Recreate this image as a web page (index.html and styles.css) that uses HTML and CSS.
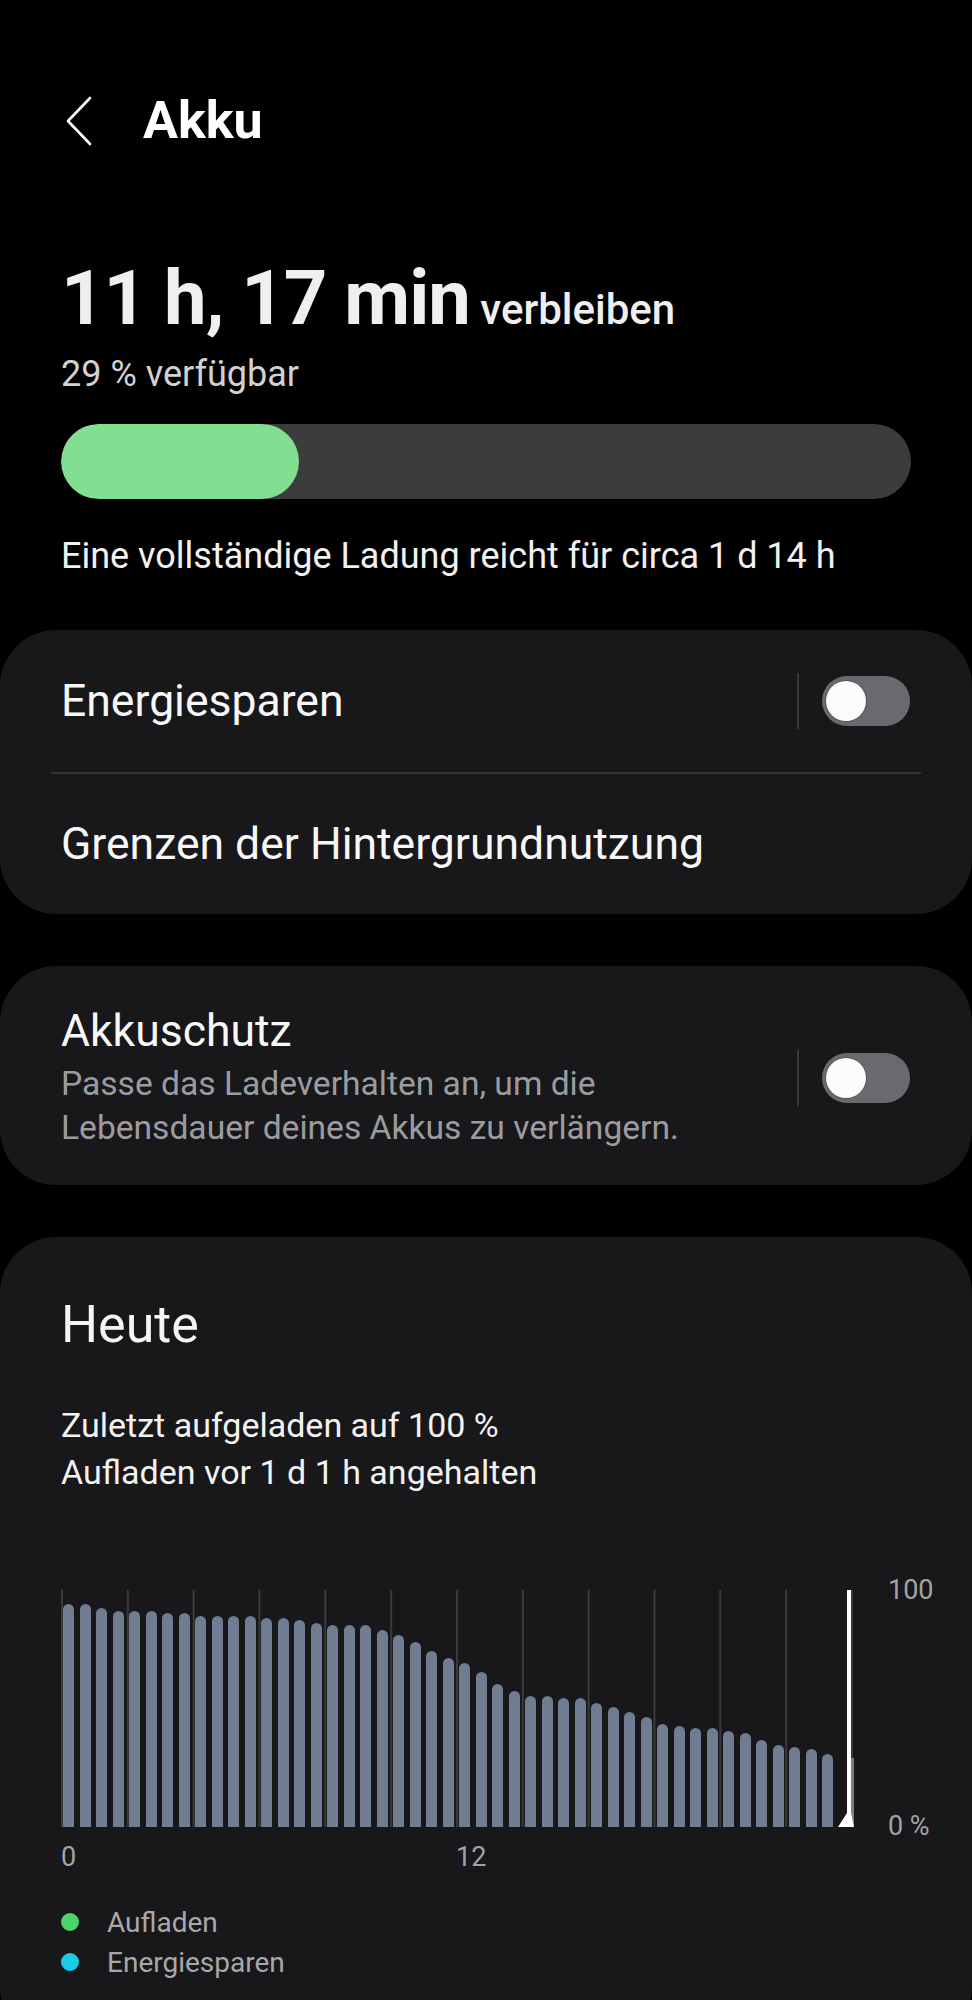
FILE: index.html
```html
<!DOCTYPE html>
<html lang="de">
<head>
  <meta charset="UTF-8" />
  <meta name="viewport" content="width=device-width, initial-scale=1.0"/>
  <title>Akku</title>
  <link rel="stylesheet" href="styles.css">
</head>
<body>
  <div class="screen">
    <header class="topbar">
      <svg class="back" viewBox="0 0 28 50" width="28" height="50">
        <polyline points="25,2 3,25 25,48" fill="none" stroke="#fff" stroke-width="2.6" stroke-linecap="round" stroke-linejoin="round"/>
      </svg>
      <h1>Akku</h1>
    </header>

    <section class="summary">
      <p class="remaining"><strong>11 h, 17 min</strong> <span>verbleiben</span></p>
      <p class="available">29 % verfügbar</p>
      <div class="level"><div class="level-fill" style="width:28%"></div></div>
      <p class="estimate">Eine vollständige Ladung reicht für circa 1 d 14 h</p>
    </section>

    <div class="card">
      <div class="row row-switch">
        <span class="label">Energiesparen</span>
        <span class="sep"></span>
        <span class="switch"><span class="knob"></span></span>
      </div>
      <div class="divider"></div>
      <div class="row row-link">
        <span class="label">Grenzen der Hintergrundnutzung</span>
      </div>
    </div>

    <div class="card">
      <div class="row row-protect">
        <div class="protect-text">
          <div class="label">Akkuschutz</div>
          <div class="hint">Passe das Ladeverhalten an, um die<br>Lebensdauer deines Akkus zu verlängern.</div>
        </div>
        <span class="sep"></span>
        <span class="switch"><span class="knob"></span></span>
      </div>
    </div>

    <div class="card today">
      <h2>Heute</h2>
      <p class="last-charge">Zuletzt aufgeladen auf 100 %<br>Aufladen vor 1 d 1 h angehalten</p>

      <div class="chart">
        <div class="plot">
          <div class="bars">
            <span class="bar" style="height:223px"></span>
            <span class="bar" style="height:223px"></span>
            <span class="bar" style="height:219px"></span>
            <span class="bar" style="height:216px"></span>
            <span class="bar" style="height:216px"></span>
            <span class="bar" style="height:216px"></span>
            <span class="bar" style="height:214px"></span>
            <span class="bar" style="height:214px"></span>
            <span class="bar" style="height:211px"></span>
            <span class="bar" style="height:211px"></span>
            <span class="bar" style="height:211px"></span>
            <span class="bar" style="height:211px"></span>
            <span class="bar" style="height:209px"></span>
            <span class="bar" style="height:209px"></span>
            <span class="bar" style="height:207px"></span>
            <span class="bar" style="height:204px"></span>
            <span class="bar" style="height:202px"></span>
            <span class="bar" style="height:202px"></span>
            <span class="bar" style="height:202px"></span>
            <span class="bar" style="height:197px"></span>
            <span class="bar" style="height:192px"></span>
            <span class="bar" style="height:185px"></span>
            <span class="bar" style="height:176px"></span>
            <span class="bar" style="height:169px"></span>
            <span class="bar" style="height:164px"></span>
            <span class="bar" style="height:155px"></span>
            <span class="bar" style="height:143px"></span>
            <span class="bar" style="height:136px"></span>
            <span class="bar" style="height:131px"></span>
            <span class="bar" style="height:131px"></span>
            <span class="bar" style="height:129px"></span>
            <span class="bar" style="height:129px"></span>
            <span class="bar" style="height:124px"></span>
            <span class="bar" style="height:120px"></span>
            <span class="bar" style="height:115px"></span>
            <span class="bar" style="height:110px"></span>
            <span class="bar" style="height:103px"></span>
            <span class="bar" style="height:101px"></span>
            <span class="bar" style="height:99px"></span>
            <span class="bar" style="height:99px"></span>
            <span class="bar" style="height:96px"></span>
            <span class="bar" style="height:94px"></span>
            <span class="bar" style="height:87px"></span>
            <span class="bar" style="height:82px"></span>
            <span class="bar" style="height:80px"></span>
            <span class="bar" style="height:78px"></span>
            <span class="bar" style="height:73px"></span>
          </div>
          <span class="now-tail"></span>
          <span class="now"></span>
          <span class="now-arrow"></span>
        </div>
        <div class="yaxis">
          <span>100</span>
          <span>0 %</span>
        </div>
      </div>

      <div class="xaxis">
        <span>0</span>
        <span class="noon">12</span>
      </div>

      <ul class="legend">
        <li><span class="dot dot-charge"></span>Aufladen</li>
        <li><span class="dot dot-saver"></span>Energiesparen</li>
      </ul>
    </div>
  </div>
</body>
</html>
```

FILE: styles.css
```css
body {
  margin: 0;
  background: #000;
  font-family: Roboto, "Noto Sans", sans-serif;
  color: #f2f2f2;
}

.screen {
  width: 972px;
}

p {
  margin: 0;
}

/* Kopfzeile */
.topbar {
  display: flex;
  align-items: center;
  height: 60px;
  margin-top: 91px;
  padding-left: 65px;
}

.back {
  display: block;
}

h1 {
  margin: 0 0 0 50px;
  font-size: 52px;
  font-weight: 700;
  line-height: 60px;
  color: #fff;
}

/* Restlaufzeit */
.summary {
  padding: 0 61px;
}

.remaining {
  margin-top: 107px;
  font-size: 42px;
  line-height: 80px;
  color: #efefef;
}

.remaining strong {
  font-size: 76px;
  font-weight: 700;
  letter-spacing: -1px;
}

.remaining span {
  font-weight: 500;
}

.available {
  margin-top: 2px;
  font-size: 36px;
  line-height: 44px;
  color: #d2d2d2;
}

.level {
  margin-top: 28px;
  height: 75px;
  border-radius: 38px;
  background: #3c3c3c;
  overflow: hidden;
}

.level-fill {
  height: 100%;
  border-radius: 38px;
  background: #82de90;
}

.estimate {
  margin-top: 35px;
  font-size: 36px;
  line-height: 44px;
}

/* Karten */
.card {
  margin-top: 52px;
  background: #18181a;
  border-radius: 56px;
}

.row {
  display: flex;
  align-items: center;
  padding: 0 62px 0 61px;
}

.row-switch {
  height: 142px;
}

.row-link {
  height: 140px;
}

.row-protect {
  padding-top: 39px;
  padding-bottom: 35px;
}

.label {
  flex: 1;
  font-size: 44.5px;
  line-height: 52px;
  color: #f7f7f7;
}

.protect-text {
  flex: 1;
}

.hint {
  margin-top: 5px;
  font-size: 33.6px;
  line-height: 44px;
  color: #9c9ca0;
}

.sep {
  width: 2px;
  height: 56px;
  margin-right: 23px;
  background: #38383b;
}

.switch {
  display: flex;
  align-items: center;
  box-sizing: border-box;
  width: 88px;
  height: 50px;
  padding-left: 4px;
  border-radius: 25px;
  background: #6a6a6e;
}

.knob {
  width: 40px;
  height: 40px;
  border-radius: 50%;
  background: #fcfcfd;
  box-shadow: 0 0 0 1px rgba(0,0,0,0.18);
}

.divider {
  height: 2px;
  margin: 0 51px;
  background: #343437;
}

/* Heute */
.today {
  padding: 58px 62px 60px 61px;
}

.today h2 {
  margin: 0;
  font-size: 52px;
  font-weight: 400;
  line-height: 60px;
  color: #f5f5f5;
}

.last-charge {
  margin-top: 47px;
  font-size: 34px;
  line-height: 47px;
}

.chart {
  display: flex;
  margin-top: 94px;
}

.plot {
  position: relative;
  flex-shrink: 0;
  width: 792px;
  height: 237px;
  background: linear-gradient(to right, #3a3a3c 2px, transparent 2px) 0 0 / 65.83px 100% repeat-x;
}

.bars {
  display: flex;
  align-items: flex-end;
  gap: 5.5px;
  height: 100%;
  padding-left: 2px;
}

.bar {
  width: 11px;
  border-radius: 6px 6px 0 0;
  background: #707c91;
}

.now {
  position: absolute;
  top: 0;
  bottom: 0;
  left: 786px;
  width: 4px;
  background: #fff;
}

.now-tail {
  position: absolute;
  bottom: 0;
  left: 790px;
  width: 3px;
  height: 69px;
  background: #7d7d80;
}

.now-arrow {
  position: absolute;
  bottom: 0;
  left: 777px;
  width: 16px;
  height: 14px;
  background: #fff;
  clip-path: polygon(0 100%, 56% 0, 82% 0, 100% 100%);
}

.yaxis {
  display: flex;
  flex-direction: column;
  justify-content: space-between;
  flex-shrink: 0;
  margin: -16px 0 -15px 35px;
  font-size: 27px;
  line-height: 32px;
  color: #a3a3a6;
}

.xaxis {
  display: grid;
  grid-template-columns: repeat(12, 65.83px);
  margin-top: 14px;
  font-size: 27px;
  line-height: 32px;
  color: #a3a3a6;
}

.xaxis .noon {
  grid-column: 7;
}

.legend {
  list-style: none;
  margin: 29px 0 0;
  padding: 0;
}

.legend li {
  display: flex;
  align-items: center;
  gap: 28px;
  height: 40px;
  font-size: 28px;
  color: #a8a8ac;
}

.dot {
  width: 18px;
  height: 18px;
  border-radius: 50%;
}

.dot-charge {
  background: #4cd36b;
}

.dot-saver {
  background: #1bcbe6;
}
```
